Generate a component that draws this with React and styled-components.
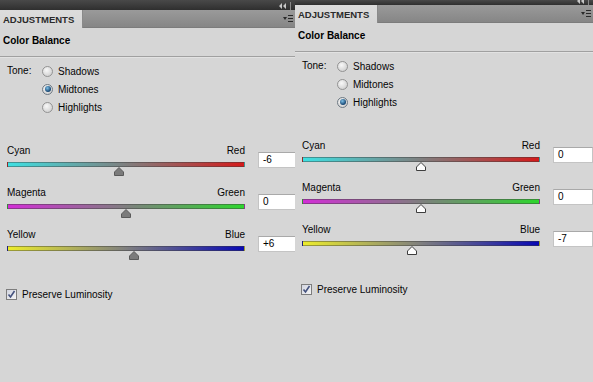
import React from "react";
import styled, { createGlobalStyle } from "styled-components";

// ---------- Global ----------
const GlobalStyle = createGlobalStyle`
  html, body { margin: 0; padding: 0; background: #d6d6d6; }
  body {
    font-family: "Liberation Sans", Arial, sans-serif;
    font-size: 10px; color: #050505;
  }
`;

// ---------- Layout ----------
const Desk = styled.div`
  display: flex; width: 593px; height: 382px;
  overflow: hidden; background: #d6d6d6;
`;
const Panel = styled.section`
  flex: none; width: ${p => p.$width}px; height: 100%;
  display: flex; flex-direction: column;
  overflow: hidden; background: #d6d6d6;
`;
const TopBar = styled.div`
  flex: none; height: ${p => p.$height}px;
  display: flex; justify-content: flex-end; align-items: flex-end;
  padding-right: 3px; overflow: hidden;
  background: linear-gradient(#494949, #2f2f2f);
`;
const TabRow = styled.div`
  flex: none; height: 18px;
  display: flex; align-items: stretch;
  background: linear-gradient(#9a9a9a, #868686);
  border-bottom: 1px solid #7c7c7c;
  box-sizing: border-box;
`;
const Tab = styled.div`
  display: flex; align-items: center;
  padding: 1px 8px 0 3px;
  background: linear-gradient(#dcdcdc, #d6d6d6);
  border-right: 1px solid #8a8a8a;
  font-size: 9.5px; font-weight: bold; color: #2b2b2b;
  margin-bottom: -1px;
`;
const TabFill = styled.div`flex: 1;`;
const MenuButton = styled.div`
  display: flex; align-items: center; padding-right: 2px;
`;
const Title = styled.div`
  flex: none; height: 29px; box-sizing: border-box;
  padding: 6px 0 0 3px;
  font-weight: bold; line-height: 13px; color: #000;
  border-bottom: 1px solid #a0a0a0;
  box-shadow: 0 1px 0 #e2e2e2;
`;
const Body = styled.div`
  display: flex; flex-direction: column;
  padding: 5px 0 0 7px;
`;

// ---------- Tone ----------
const ToneBlock = styled.div`display: flex;`;
const ToneLabel = styled.div`width: 35px; line-height: 18px;`;
const RadioList = styled.div`display: flex; flex-direction: column;`;
const RadioRow = styled.label`
  display: flex; align-items: center; gap: 5px; height: 18px;
`;
const Radio = styled.span`
  width: 11px; height: 11px; box-sizing: border-box; border-radius: 50%;
  border: 1px solid ${p => (p.$on ? "#6f7a84" : "#939393")};
  background: radial-gradient(circle at 40% 35%, #f8f8f8, #c6c6c6);
  display: flex; align-items: center; justify-content: center;
  &::after {
    content: "";
    width: 6px; height: 6px; border-radius: 50%;
    display: ${p => (p.$on ? "block" : "none")};
    background: radial-gradient(circle at 40% 35%, #7fc0e6, #1a4b78 65%, #0f2f50);
  }
`;

// ---------- Sliders ----------
const Sliders = styled.div`
  display: flex; flex-direction: column; margin-top: 28px;
`;
const SliderRow = styled.div`
  display: flex; gap: 13px; margin-bottom: 10px;
`;
const Track = styled.div`
  flex: none; width: 238px; display: flex; flex-direction: column;
`;
const Ends = styled.div`
  display: flex; justify-content: space-between;
  height: 14px; line-height: 14px;
`;
const Bar = styled.div`
  height: 5px; margin-top: 4px; box-sizing: border-box;
  border: 1px solid rgba(60, 60, 60, 0.45);
  background: linear-gradient(90deg, ${p => p.$from}, #7f7f7f 50%, ${p => p.$to});
`;
const ThumbLane = styled.div`position: relative; height: 9px;`;
const ThumbSvg = styled.svg`position: absolute; top: 0;`;
const ValueBox = styled.div`
  flex: none; width: 40px; height: 16px; margin-top: 8px;
  box-sizing: border-box; padding-left: 4px;
  background: #fff; border: 1px solid #c4c4c4; border-top-color: #a9a9a9;
  line-height: 14px; color: #000;
`;

// ---------- Checkbox ----------
const CheckRow = styled.label`
  display: flex; align-items: center; gap: 5px;
  margin: 19px 0 0 -1px; height: 11px;
`;
const CheckBox = styled.span`
  width: 11px; height: 11px; box-sizing: border-box;
  border: 1px solid #7d7d7d;
  background: linear-gradient(135deg, #d2d5e0, #f4f4f4);
  display: flex; align-items: center; justify-content: center;
`;

// ---------- Icons ----------
const CollapseIcon = () => (
  <svg width="14" height="8" viewBox="0 0 14 8">
    <path d="M4 1 L1 4 L4 7 Z M8 1 L5 4 L8 7 Z" fill="#c8c8c8" />
    <rect x="12" y="0" width="1" height="8" fill="#8a8a8a" />
  </svg>
);
const MenuIcon = () => (
  <svg width="10" height="7" viewBox="0 0 10 7">
    <path d="M0 2 L4 2 L2 5 Z" fill="#2a2a2a" />
    <rect x="5" y="0" width="5" height="1" fill="#2a2a2a" />
    <rect x="5" y="3" width="5" height="1" fill="#2a2a2a" />
    <rect x="5" y="6" width="5" height="1" fill="#2a2a2a" />
  </svg>
);
const Thumb = ({ value, light }) => (
  <ThumbSvg width="10" height="9" viewBox="0 0 10 9" style={{ left: 114 + value * 1.25 }}>
    <path
      d="M5 0.5 L9.5 5 L9.5 8.5 L0.5 8.5 L0.5 5 Z"
      fill={light ? "#fdfdfd" : "#7b7b7b"}
      stroke={light ? "#3e3e3e" : "#5a5a5a"}
    />
  </ThumbSvg>
);
const Tick = () => (
  <svg width="9" height="9" viewBox="0 0 9 9">
    <path d="M1.5 4.5 L3.5 7 L7.5 1" fill="none" stroke="#44527e" strokeWidth="1.6" />
  </svg>
);

// ---------- Data ----------
const channels = [
  { left: "Cyan", right: "Red", from: "#3ee0e2", to: "#d41a1a" },
  { left: "Magenta", right: "Green", from: "#d22ed6", to: "#2ed62e" },
  { left: "Yellow", right: "Blue", from: "#ecec2c", to: "#0808b4" },
];
const tones = ["Shadows", "Midtones", "Highlights"];

function AdjustmentsPanel({ width, top, tone, values, lightThumbs }) {
  return (
    <Panel $width={width}>
      <TopBar $height={top}>
        <CollapseIcon />
      </TopBar>
      <TabRow>
        <Tab>ADJUSTMENTS</Tab>
        <TabFill />
        <MenuButton><MenuIcon /></MenuButton>
      </TabRow>
      <Title>Color Balance</Title>
      <Body>
        <ToneBlock>
          <ToneLabel>Tone:</ToneLabel>
          <RadioList>
            {tones.map(t => (
              <RadioRow key={t}>
                <Radio $on={t === tone} />
                {t}
              </RadioRow>
            ))}
          </RadioList>
        </ToneBlock>
        <Sliders>
          {channels.map((c, i) => (
            <SliderRow key={c.left}>
              <Track>
                <Ends><span>{c.left}</span><span>{c.right}</span></Ends>
                <Bar $from={c.from} $to={c.to} />
                <ThumbLane><Thumb value={values[i]} light={lightThumbs} /></ThumbLane>
              </Track>
              <ValueBox>{values[i] > 0 ? `+${values[i]}` : values[i]}</ValueBox>
            </SliderRow>
          ))}
        </Sliders>
        <CheckRow>
          <CheckBox><Tick /></CheckBox>
          Preserve Luminosity
        </CheckRow>
      </Body>
    </Panel>
  );
}

export default function App() {
  return (
    <>
      <GlobalStyle />
      <Desk>
        <AdjustmentsPanel width={295} top={10} tone="Midtones" values={[-6, 0, 6]} />
        <AdjustmentsPanel width={298} top={5} tone="Highlights" values={[0, 0, -7]} lightThumbs />
      </Desk>
    </>
  );
}
